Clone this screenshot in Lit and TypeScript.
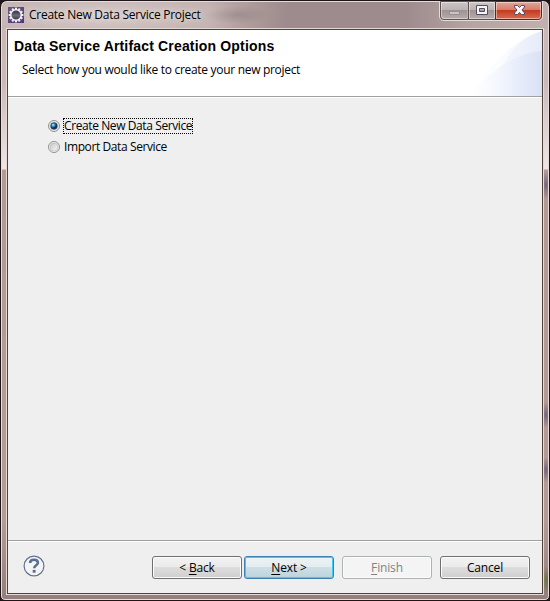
import { LitElement, html, css, svg } from "lit";
import { customElement, property, state } from "lit/decorators.js";
import { classMap } from "lit/directives/class-map.js";

@customElement("wizard-titlebar")
class WizardTitlebar extends LitElement {
  @property() heading = "";

  static styles = css`
    :host { display: flex; height: 26px; position: relative; align-items: center; padding-left: 2px; box-sizing: border-box; }
    .icon { width: 16px; height: 16px; }
    .title {
      margin-left: 5px; font-size: 12px; line-height: 16px; white-space: pre; color: #000;
      letter-spacing: -0.26px; text-shadow: 0 0 6px #fff9, 0 0 10px #fff8;
    }
    .controls { position: absolute; right: 1px; top: -1px; width: 104px; height: 20px; }
  `;

  render() {
    const teeth = Array.from({ length: 12 }, (_, i) =>
      svg`<rect x="7" y="0.6" width="2" height="3" fill="#f4f1f4" transform="rotate(${i * 30} 8 8)"/>`);
    return html`
      <svg class="icon" viewBox="0 0 16 16">
        <defs>
          <linearGradient id="tile" x2="1" y2="1"><stop stop-color="#675b78"/><stop offset="1" stop-color="#4f3681"/></linearGradient>
          <linearGradient id="disc" x2="0" y2="1"><stop stop-color="#2e2b38"/><stop offset=".55" stop-color="#6c6880"/><stop offset="1" stop-color="#34303f"/></linearGradient>
        </defs>
        <rect width="16" height="16" fill="url(#tile)"/>
        ${teeth}
        <circle cx="8" cy="8" r="5.3" fill="url(#disc)" stroke="#f4f1f4" stroke-width="1.5"/>
      </svg>
      <span class="title">${this.heading}</span>
      <svg class="controls" viewBox="0 0 104 20">
        <defs>
          <linearGradient id="glass" x2="0" y2="1">
            <stop stop-color="#cdc5c6"/><stop offset=".48" stop-color="#bdb2b3"/><stop offset=".5" stop-color="#9f9394"/><stop offset="1" stop-color="#b9adad"/>
          </linearGradient>
          <linearGradient id="close" x2="0" y2="1">
            <stop stop-color="#e3a799"/><stop offset=".46" stop-color="#d67d6a"/><stop offset=".5" stop-color="#c23c22"/><stop offset="1" stop-color="#dc6e50"/>
          </linearGradient>
        </defs>
        <path d="M.5 0V15Q.5 19.500 5 19.500H99Q103.500 19.500 103.500 15V0" fill="none" stroke="#e6dcdc"/>
        <path d="M1.500 .500H29V18.500H5Q1.500 18.500 1.500 15Z" fill="url(#glass)" stroke="#5e5152"/>
        <path d="M29.500 .500H56.500V18.500H29.500Z" fill="url(#glass)" stroke="#5e5152"/>
        <path d="M56.500 .500H102.500V15Q102.500 18.500 99 18.500H56.500Z" fill="url(#close)" stroke="#5d2520"/>
        <path d="M2.500 1.500V15Q2.500 17.500 5 17.500H28.500V1.500ZM30.500 1.500H55.500V17.500H30.500ZM57.500 1.500H101.500V15Q101.500 17.500 99 17.500H57.500Z" fill="none" stroke="#fff" stroke-opacity=".45"/>
        <rect x="10.500" y="10.500" width="10" height="3" fill="#c9c5c5" stroke="#989090"/>
        <path fill-rule="evenodd" d="M37.500 4.500H48.500V13.500H37.500ZM40.500 7.500V10.500H45.500V7.500Z" fill="#f5f5f6" stroke="#52505e"/>
        <path d="M75.500 4.500H78.500L80.500 6.500L82.500 4.500H85.500V6L83 9L85.500 12V13.500H82.500L80.500 11.500L78.500 13.500H75.500V12L78 9L75.500 6Z" fill="#f7f7f8" stroke="#5a4c5b" stroke-linejoin="round"/>
      </svg>`;
  }
}

@customElement("wizard-header")
class WizardHeader extends LitElement {
  static styles = css`
    :host { display: block; position: relative; height: 66px; background: #fff; border-bottom: 1px solid #a0a0a0; box-shadow: 0 1px #fff; }
    .banner { position: absolute; right: 0; top: 0; width: 76px; height: 66px; }
    .copy { position: relative; padding: 8px 0 0 6px; }
    .heading { font: bold 14px/17px "Liberation Sans", Arial, sans-serif; letter-spacing: 0.17px; white-space: pre; }
    .description { font-size: 12px; line-height: 16px; margin: 7px 0 0 8px; letter-spacing: -0.3px; white-space: pre; }
  `;

  render() {
    return html`
      <svg class="banner" viewBox="0 0 76 66">
        <defs>
          <linearGradient id="haze" gradientUnits="userSpaceOnUse" x1="0" x2="76"><stop stop-color="#fff"/><stop offset=".4" stop-color="#fcfdff"/><stop offset="1" stop-color="#eef2fc"/></linearGradient>
          <linearGradient id="back" gradientUnits="userSpaceOnUse" x1="26" x2="76"><stop stop-color="#fafbff"/><stop offset="1" stop-color="#e5ebf9"/></linearGradient>
          <linearGradient id="front" gradientUnits="userSpaceOnUse" x1="4" x2="76"><stop stop-color="#fff"/><stop offset=".35" stop-color="#f5f8fe"/><stop offset="1" stop-color="#dae1f6"/></linearGradient>
        </defs>
        <path d="M76 1Q36 14 4 66H76Z" fill="url(#haze)"/>
        <path d="M76 1Q50 8 36 38L26 66H76Z" fill="url(#back)"/>
        <path d="M76 21Q37 24 4 66H76Z" fill="url(#front)"/>
      </svg>
      <div class="copy">
        <div class="heading">Data Service Artifact Creation Options</div>
        <div class="description">Select how you would like to create your new project</div>
      </div>`;
  }
}

@customElement("radio-option")
class RadioOption extends LitElement {
  @property() label = "";
  @property({ type: Boolean }) checked = false;

  static styles = css`
    :host { display: flex; align-items: center; height: 16px; }
    svg { width: 12px; height: 12px; flex: none; }
    .label { box-sizing: border-box; height: 16px; line-height: 14px; font-size: 12px; white-space: pre; margin-left: 3px; padding: 1px 0 0 1px; letter-spacing: -0.4px; }
    .focused { outline: 1px dotted #000; outline-offset: -1px; padding-right: 1px; }
  `;

  render() {
    return html`
      <svg viewBox="0 0 12 12">
        <defs>
          <linearGradient id="well" x2="1" y2="1"><stop stop-color="#c3c6ca"/><stop offset="1" stop-color="#f8f8f8"/></linearGradient>
          <radialGradient id="dot" cx=".35" cy=".3"><stop stop-color="#b6edfa"/><stop offset=".5" stop-color="#3c9fca"/><stop offset="1" stop-color="#0c3558"/></radialGradient>
        </defs>
        <circle cx="6" cy="6" r="5.500" fill="#f4f4f4" stroke="#8e8f8f"/>
        <circle cx="6" cy="6" r="4" fill="url(#well)" stroke="#b8bbc0" stroke-width=".6"/>
        ${this.checked ? svg`<circle cx="6" cy="6" r="3.200" fill="url(#dot)" stroke="#173b59" stroke-width=".8"/>` : ""}
      </svg>
      <span class=${classMap({ label: true, focused: this.checked })}>${this.label}</span>`;
  }
}

@customElement("push-button")
class PushButton extends LitElement {
  @property() before = "";
  @property() mnemonic = "";
  @property() after = "";
  @property() kind = "normal";

  static styles = css`
    :host { display: block; width: 90px; height: 23px; }
    .button {
      box-sizing: border-box; width: 100%; height: 100%; display: flex; align-items: center; justify-content: center;
      border: 1px solid #707070; border-radius: 3px; box-shadow: inset 0 0 0 1px #fcfcfc;
      background: linear-gradient(#f2f2f2, #ebebeb 49%, #dddddd 50%, #cfcfcf);
      font-size: 12px; line-height: 16px; letter-spacing: -0.15px;
    }
    .primary {
      border-color: #3c7fb1; box-shadow: inset 0 0 0 1px #3fcdf8;
      background: linear-gradient(#eef3f5, #e2ecef 49%, #cddfe6 50%, #bdd3dc);
    }
    .disabled { border-color: #adb2b5; background: #f4f4f4; color: #838383; }
    .text { white-space: pre; }
    .key { text-decoration: underline; text-underline-offset: 2px; text-decoration-thickness: 1px; text-decoration-skip-ink: none; }
  `;

  render() {
    return html`<div class=${classMap({ button: true, [this.kind]: true })}><span class="text">${this.before}<span class="key">${this.mnemonic}</span>${this.after}</span></div>`;
  }
}

@customElement("app-root")
class AppRoot extends LitElement {
  @state() private options = ["Create New Data Service", "Import Data Service"];
  @state() private selected = 0;

  static styles = css`
    :host { display: block; width: 550px; height: 601px; background: #1d1517; font-family: "Open Sans", "Noto Sans", sans-serif; color: #000; overflow: hidden; }
    .window {
      box-sizing: border-box; width: 550px; height: 601px; display: flex; flex-direction: column;
      border: 1px solid #1d1517; border-radius: 7px 7px 5px 5px; box-shadow: inset 0 0 0 1px #e7dcdb; padding: 1px 5px 5px;
      background:
        radial-gradient(ellipse 5px 14px at 545px 184px, #74647b, transparent),
        radial-gradient(ellipse 5px 13px at 545px 414px, #74647b, transparent),
        radial-gradient(ellipse 5px 13px at 545px 469px, #74647b, transparent),
        radial-gradient(ellipse 5px 14px at 546px 579px, #66753f, transparent),
        radial-gradient(ellipse 32px 9px at 236px 14px, #7e6f7466, transparent),
        radial-gradient(ellipse 140px 25px at 105px 15px, #dfd5d4aa, transparent),
        linear-gradient(transparent 28px, #c9b8b5 28px, #c9bab9 80px, #efe6e4 168px, #b39a94 169px, #b49b95 520px, #927e7b 600px),
        linear-gradient(90deg, #c3b3b2, #c0afad 38%, #9e8b8d 52%, #9d8b8e 74%, #b5a3a1 85%, #c1b0ae);
    }
    .client { flex: 1; display: flex; flex-direction: column; border: 1px solid #51413f; outline: 1px solid #e5d9d7; background: #efefef; margin: 1px 1px 1px; }
    .options { flex: 1; display: flex; flex-direction: column; gap: 5px; padding: 21px 0 0 40px; }
    .footer { box-sizing: border-box; height: 53px; border-top: 1px solid #a0a0a0; box-shadow: inset 0 1px #fff; display: flex; padding: 15px 12px 0 15px; }
    .help { width: 22px; height: 22px; margin: -1px auto 0 0; }
    .ring { fill: #f4f4f5; stroke: #5f7290; stroke-width: 1.200; }
    .mark { fill: none; stroke: #586e92; stroke-width: 2.600; }
    .navigation { display: flex; gap: 2px; margin-right: 8px; }
    .actions { display: flex; gap: 8px; }
  `;

  render() {
    return html`
      <div class="window">
        <wizard-titlebar heading="Create New Data Service Project"></wizard-titlebar>
        <div class="client">
          <wizard-header></wizard-header>
          <div class="options">
            ${this.options.map((label, i) => html`<radio-option .label=${label} .checked=${i === this.selected}></radio-option>`)}
          </div>
          <div class="footer">
            <svg class="help" viewBox="0 0 22 22">
              <circle class="ring" cx="11" cy="11" r="9.900"/>
              <path class="mark" d="M7 8C7.200 5.700 8.800 4.700 11 4.700C13.400 4.700 14.900 5.900 14.900 7.800C14.900 10.400 11.200 10.200 11.200 13.300"/>
              <rect x="9.700" y="14.900" width="2.900" height="2.800" fill="#586e92"/>
            </svg>
            <div class="navigation">
              <push-button before="< " mnemonic="B" after="ack"></push-button>
              <push-button mnemonic="N" after="ext >" kind="primary"></push-button>
            </div>
            <div class="actions">
              <push-button mnemonic="F" after="inish" kind="disabled"></push-button>
              <push-button after="Cancel"></push-button>
            </div>
          </div>
        </div>
      </div>`;
  }
}
